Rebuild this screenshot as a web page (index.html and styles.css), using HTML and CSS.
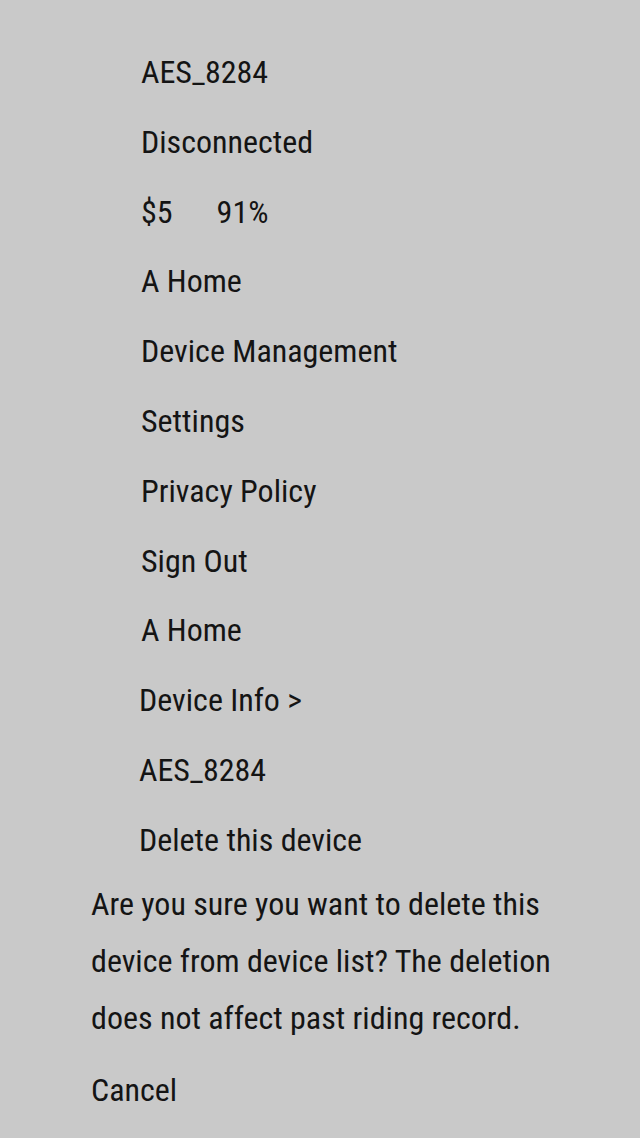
FILE: index.html
```html
<!DOCTYPE html>
<html>
<head>
<meta charset="utf-8">
<link rel="stylesheet" href="styles.css">
</head>
<body>
<div class="screen">
  <ul class="menu">
    <li class="item">AES_8284</li>
    <li class="item">Disconnected</li>
    <li class="item"><span class="price">$5</span><span>91%</span></li>
    <li class="item">A Home</li>
    <li class="item">Device Management</li>
    <li class="item">Settings</li>
    <li class="item">Privacy Policy</li>
    <li class="item">Sign Out</li>
    <li class="item">A Home</li>
    <li class="item shift">Device Info &gt;</li>
    <li class="item shift">AES_8284</li>
    <li class="item shift">Delete this device</li>
  </ul>
  <div class="dialog">
    <p class="message">Are you sure you want to delete this device from device list? The deletion does not affect past riding record.</p>
    <div class="cancel">Cancel</div>
  </div>
</div>
</body>
</html>
```
FILE: styles.css
```css
html, body {
  margin: 0;
  padding: 0;
  background: #c9c9c9;
}
.screen {
  width: 640px;
  height: 1138px;
  background: #c9c9c9;
  color: #141414;
  font-family: "Roboto Condensed", Roboto, sans-serif;
  overflow: hidden;
}
.menu {
  list-style: none;
  margin: 0;
  padding: 38px 0 0 141px;
}
.item {
  font-size: 32px;
  height: 69.8px;
  line-height: 69.8px;
  white-space: nowrap;
}
.item.shift {
  margin-left: -2px;
}
.price {
  margin-right: 44px;
}
.dialog {
  padding: 0 40px 0 91px;
}
.message {
  margin: 0;
  font-size: 32px;
  line-height: 57px;
}
.cancel {
  font-size: 32px;
  line-height: 70px;
  margin-top: 8px;
}
```
